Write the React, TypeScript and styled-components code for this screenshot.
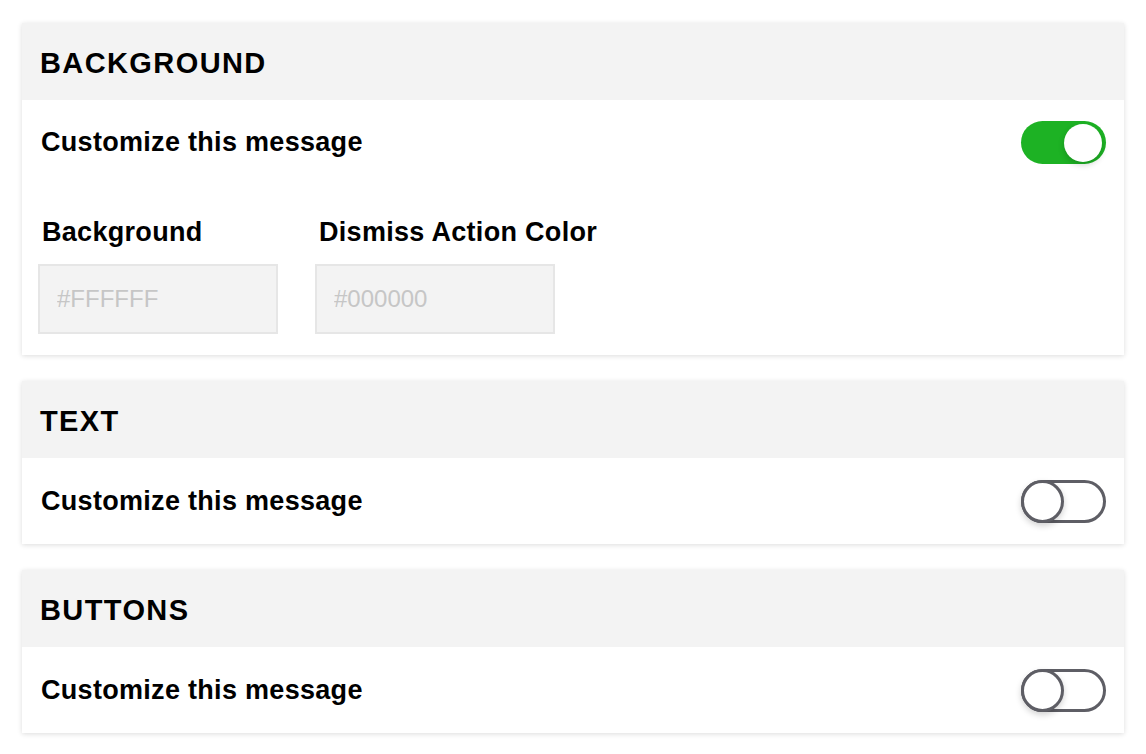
import React from "react";
import styled, { createGlobalStyle } from "styled-components";

const Global = createGlobalStyle`
  html, body { margin: 0; padding: 0; background: #ffffff; }
  body { font-family: "Liberation Sans", Arial, sans-serif; color: #000; }
`;

const Page = styled.div`
  display: flex;
  flex-direction: column;
  gap: 26px;
  padding: 23px 22px;
`;

const Card = styled.section`
  background: #fff;
  box-shadow: 0 1px 5px rgba(0, 0, 0, 0.14);
`;

const Header = styled.div`
  height: 77px;
  box-sizing: border-box;
  background: #f3f3f3;
  display: flex;
  align-items: center;
  padding: 3px 18px 0;
  font-size: 29px;
  font-weight: 700;
  letter-spacing: 1.4px;
`;

const Body = styled.div<{ $bottom?: number }>`
  padding: 0 18px ${(p) => p.$bottom ?? 0}px 16px;
`;

const Row = styled.div<{ $height?: number }>`
  height: ${(p) => p.$height ?? 86}px;
  display: flex;
  align-items: center;
  justify-content: space-between;
`;

const RowLabel = styled.span`
  font-size: 27px;
  font-weight: 700;
  letter-spacing: 0.3px;
  padding-left: 3px;
`;

const Track = styled.div<{ $on: boolean }>`
  position: relative;
  width: 85px;
  height: 43px;
  border-radius: 22px;
  box-sizing: border-box;
  background: ${(p) => (p.$on ? "#1db224" : "#fff")};
  border: ${(p) => (p.$on ? "none" : "3px solid #5e5e65")};
`;

const Knob = styled.div<{ $on: boolean }>`
  position: absolute;
  box-sizing: border-box;
  border-radius: 50%;
  background: #fff;
  box-shadow: 0 3px 6px rgba(0, 0, 0, 0.18);
  ${(p) =>
    p.$on
      ? `width: 38px; height: 38px; top: 3px; right: 4px;`
      : `width: 43px; height: 43px; top: -3px; left: -3px; border: 3px solid #5e5e65;`}
`;

const Fields = styled.div`
  display: flex;
  gap: 37px;
  margin-top: 32px;
`;

const Field = styled.div`
  display: flex;
  flex-direction: column;
  gap: 16px;
`;

const FieldLabel = styled.label`
  font-family: "Liberation Sans Narrow", "Liberation Sans", Arial, sans-serif;
  font-size: 27px;
  font-weight: 700;
  letter-spacing: 0.3px;
  padding-left: 4px;
  line-height: 32px;
`;

const Input = styled.input`
  width: 240px;
  height: 70px;
  box-sizing: border-box;
  background: #f3f3f3;
  border: 2px solid #e6e6e6;
  padding: 0 17px;
  font-family: "Liberation Sans", Arial, sans-serif;
  font-size: 24px;
  color: #333;
  outline: none;
  &::placeholder { color: #c6c6c6; }
`;

const Toggle = ({ on }: { on: boolean }) => (
  <Track $on={on}>
    <Knob $on={on} />
  </Track>
);

export default function App() {
  return (
    <>
      <Global />
      <Page>
        <Card>
          <Header>BACKGROUND</Header>
          <Body $bottom={21}>
            <Row $height={84}>
              <RowLabel>Customize this message</RowLabel>
              <Toggle on />
            </Row>
            <Fields>
              <Field>
                <FieldLabel>Background</FieldLabel>
                <Input placeholder="#FFFFFF" />
              </Field>
              <Field>
                <FieldLabel>Dismiss Action Color</FieldLabel>
                <Input placeholder="#000000" />
              </Field>
            </Fields>
          </Body>
        </Card>
        <Card>
          <Header>TEXT</Header>
          <Body>
            <Row>
              <RowLabel>Customize this message</RowLabel>
              <Toggle on={false} />
            </Row>
          </Body>
        </Card>
        <Card>
          <Header>BUTTONS</Header>
          <Body>
            <Row>
              <RowLabel>Customize this message</RowLabel>
              <Toggle on={false} />
            </Row>
          </Body>
        </Card>
      </Page>
    </>
  );
}
